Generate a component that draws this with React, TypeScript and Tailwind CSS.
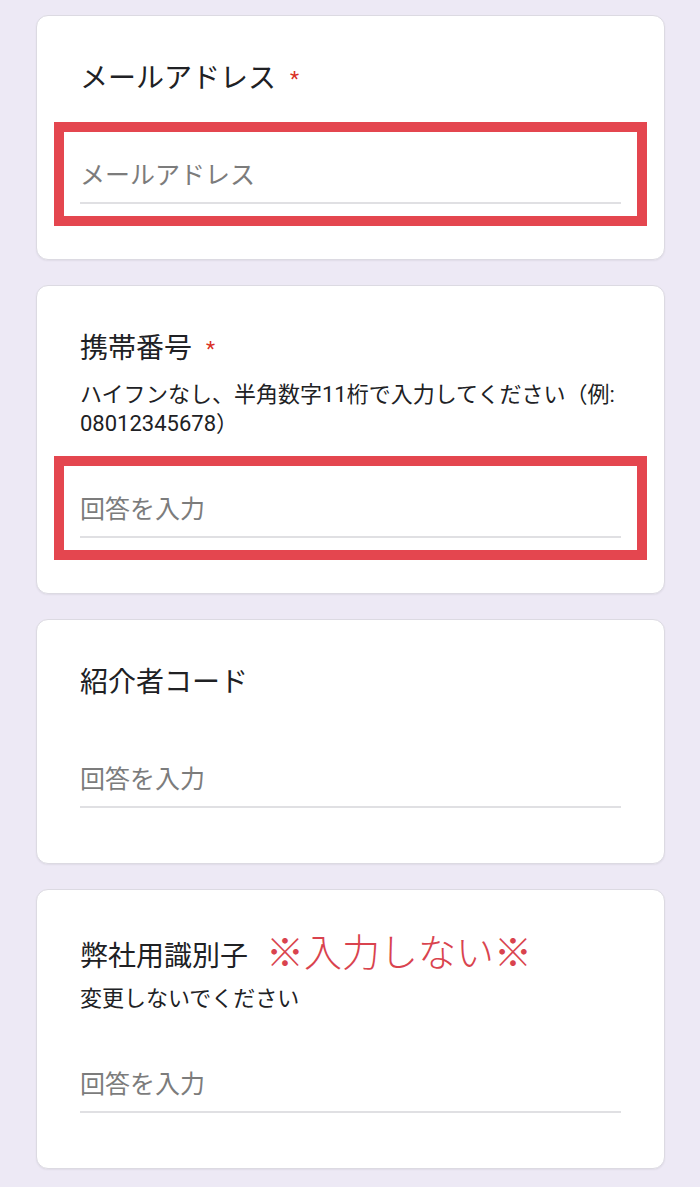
import type { ReactNode } from "react"

type Field = {
  title: string
  required?: boolean
  note?: ReactNode
  description?: string[]
  placeholder: string
  highlight?: boolean
}

const fields: Field[] = [
  { title: "メールアドレス", required: true, placeholder: "メールアドレス", highlight: true },
  {
    title: "携帯番号",
    required: true,
    description: ["ハイフンなし、半角数字11桁で入力してください（例:", "08012345678）"],
    placeholder: "回答を入力",
    highlight: true,
  },
  { title: "紹介者コード", placeholder: "回答を入力" },
  {
    title: "弊社用識別子",
    note: "※入力しない※",
    description: ["変更しないでください"],
    placeholder: "回答を入力",
  },
]

export default function App() {
  return (
    <div
      className="min-h-[1187px] bg-[#ede9f5] pt-[15px] pb-[18px] pl-[36px] pr-[35px] text-[#202124]"
      style={{ fontFamily: 'Roboto, "Noto Sans CJK JP", sans-serif' }}
    >
      <div className="flex flex-col gap-[25px]">
        {fields.map((field, index) => (
          <div
            key={index}
            className="bg-white rounded-[12px] border border-[#dcdae2] shadow-[0_1px_2px_rgba(0,0,0,0.06)] px-[43px] pt-[43px] pb-[33px]"
          >
            <div className="h-[40px] text-[28px] leading-[40px] whitespace-nowrap">
              {field.title}
              {field.required && <span className="ml-[14px] text-[21px] text-[#d93025] align-top">*</span>}
              {field.note && (
                <span className="ml-[18px] text-[38px] font-light text-[#d9434e]">
                  {field.note}
                </span>
              )}
            </div>

            {field.description && (
              <div className="mt-[11px] text-[22px] leading-[29px] text-[#202124]">
                {field.description.map((line, i) => (
                  <div key={i} className="whitespace-nowrap">{line}</div>
                ))}
              </div>
            )}

            {/* 入力欄（赤枠は注意書き） */}
            <div
              className={`-mx-[26px] border-[10px] px-[16px] pt-[28px] pb-[12px] ${
                field.highlight ? "border-[#e4464f]" : "border-transparent"
              } ${field.description ? "mt-[18px]" : "mt-[23px]"}`}
            >
              <div className="h-[32px] text-[25px] leading-[32px] text-[#7c7c7c]">{field.placeholder}</div>
              <div className="mt-[10px] h-[2px] bg-[#e0e0e3]"></div>
            </div>
          </div>
        ))}
      </div>
    </div>
  )
}
